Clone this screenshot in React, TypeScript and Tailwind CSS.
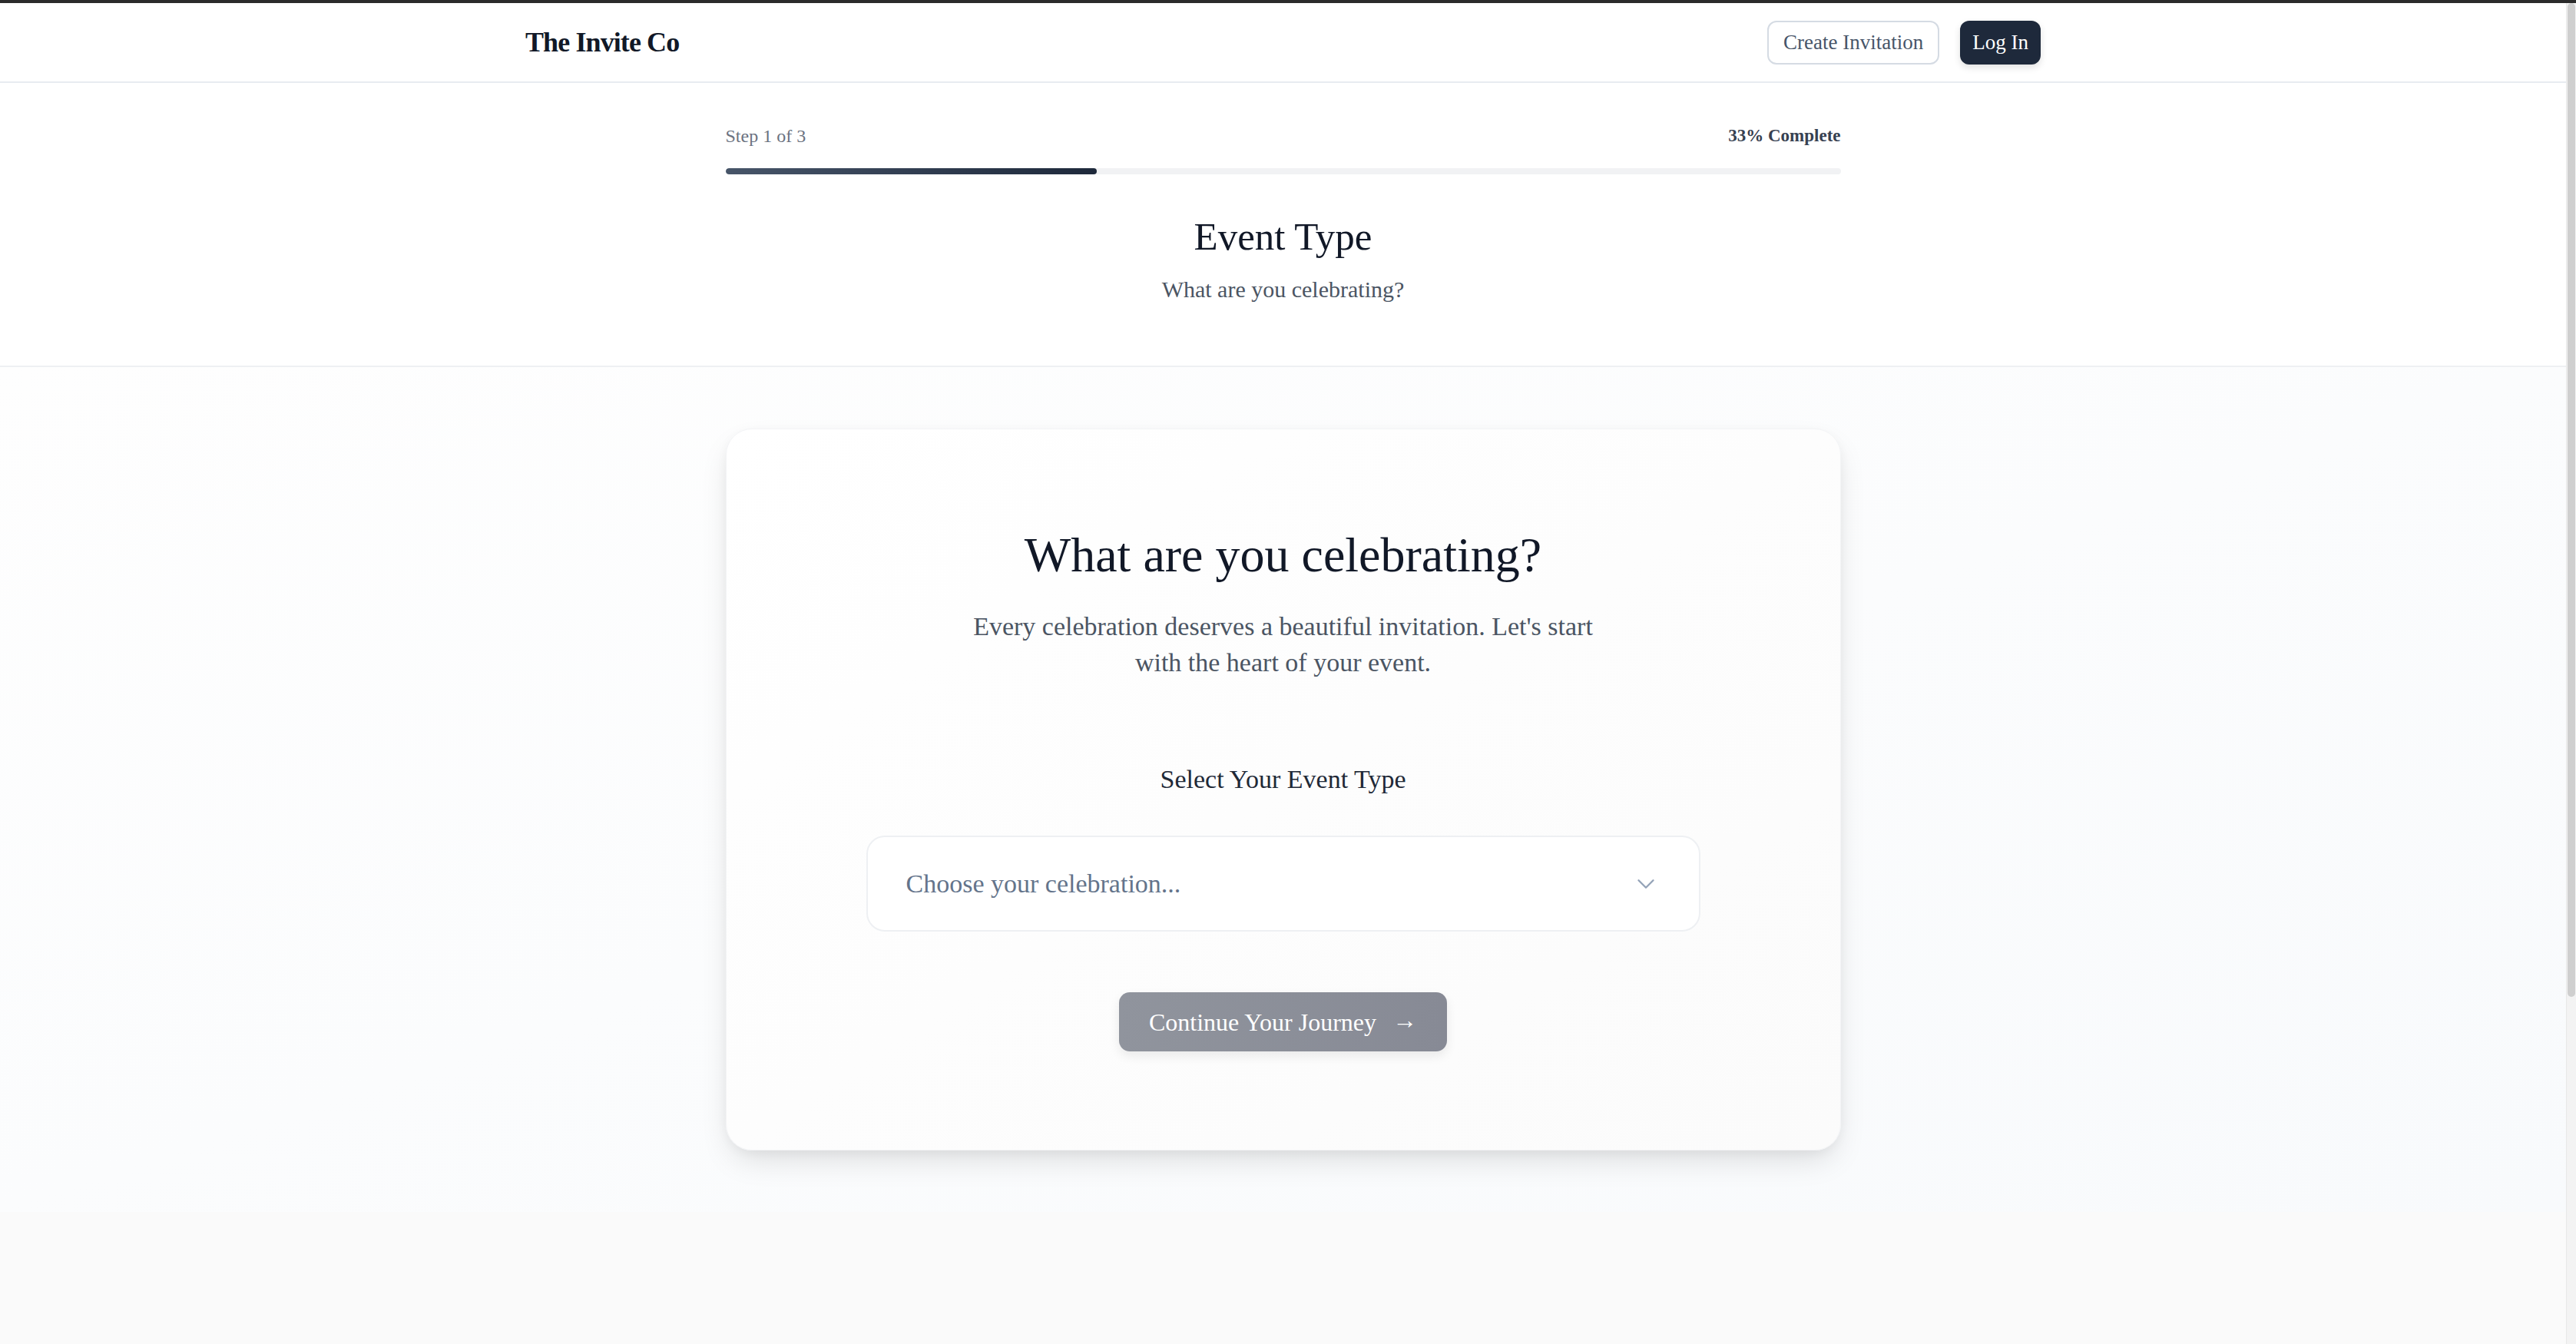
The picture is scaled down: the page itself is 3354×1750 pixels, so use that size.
import React from 'react';
import { ChevronDown } from 'lucide-react';

const serif = { fontFamily: '"Liberation Serif", "DejaVu Serif", serif' };

const Header: React.FC = () => {
  return (
    <header className="bg-white border-b-2 border-[#e8ecf1] h-[104px]">
      <div className="w-[1973px] mx-auto h-full flex items-center justify-between">
        <span className="text-[36px] font-bold text-[#111827] tracking-tight">The Invite Co</span>
        <div className="flex items-center gap-[27px]">
          <button className="h-[57px] px-[19px] rounded-[12px] border-2 border-[#d5dbe3] bg-white text-[27px] text-[#475569]">
            Create Invitation
          </button>
          <button className="h-[57px] px-[16px] rounded-[12px] bg-[#1e293b] text-[27px] text-white shadow-[0_4px_10px_rgba(0,0,0,0.12)]">
            Log In
          </button>
        </div>
      </div>
    </header>
  );
};

const Progress: React.FC = () => {
  const percent = 33.33;
  return (
    <section className="bg-white border-b-2 border-[#eef0f3] pt-[53px] pb-[79px]">
      <div className="w-[1452px] mx-auto">
        <div className="flex items-center justify-between h-[32px]">
          <span className="text-[24px] text-[#6b7280]">Step 1 of 3</span>
          <span className="text-[23px] font-semibold text-[#374151]">33% Complete</span>
        </div>
        <div className="mt-[26px] h-[8px] rounded-full bg-[#f1f2f4] overflow-hidden">
          <div
            className="h-full rounded-full bg-gradient-to-r from-[#475569] to-[#1e293b]"
            style={{ width: `${percent}%` }}
          />
        </div>
        <h1 className="mt-[51px] text-center text-[51px] leading-[60px] text-[#111827]">Event Type</h1>
        <p className="mt-[19px] text-center text-[30px] leading-[40px] text-[#4b5563]">What are you celebrating?</p>
      </div>
    </section>
  );
};

const EventCard: React.FC = () => {
  return (
    <div className="w-[1452px] mx-auto h-[940px] rounded-[34px] bg-gradient-to-br from-white to-[#fbfbfb] border border-[#f3f4f6] shadow-[0_18px_40px_-8px_rgba(0,0,0,0.13),0_4px_14px_rgba(0,0,0,0.04)] pt-[126px] px-[182px]">
      <h2 className="text-center text-[64px] leading-[76px] text-[#111827]">What are you celebrating?</h2>
      <p className="mt-[31px] mx-auto max-w-[830px] text-center text-[34px] leading-[47px] text-[#4b5563]">
        Every celebration deserves a beautiful invitation. Let's start with the heart of your event.
      </p>
      <h3 className="mt-[107px] text-center text-[34px] leading-[44px] text-[#1f2937]">Select Your Event Type</h3>
      <div className="mt-[51px] h-[125px] rounded-[24px] border-2 border-[#eef0f3] bg-white flex items-center justify-between pl-[50px] pr-[50px]">
        <span className="text-[34px] text-[#64748b]">Choose your celebration...</span>
        <ChevronDown className="w-[38px] h-[38px] text-[#94a3b8]" strokeWidth={1.5} />
      </div>
      <div className="mt-[79px] flex justify-center">
        <button className="h-[77px] px-[39px] rounded-[14px] bg-gradient-to-r from-[#90949d] to-[#878a95] text-white text-[32px] flex items-center gap-[21px] shadow-[0_6px_14px_rgba(0,0,0,0.08)]">
          <span>Continue Your Journey</span>
          <span className="text-[32px] leading-none -translate-y-[3px]">→</span>
        </button>
      </div>
    </div>
  );
};

export default function App() {
  return (
    <div className="bg-[#fafafa]" style={serif}>
      <div className="h-[4px] bg-[#2b2b2b]" />
      <div className="flex">
        <div className="flex-1 min-w-0">
          <Header />
          <Progress />
          <main className="bg-gradient-to-br from-[#fefefe] via-[#fbfcfd] to-[#f8fafc] py-[80px]">
            <EventCard />
          </main>
          <div className="h-[790px] bg-[#fafafa]" />
        </div>
        {/* page scrollbar */}
        <div className="w-[13px] bg-[#f3f3f3] border-l border-[#e8e8e8]">
          <div className="h-[1294px] mx-[1px] rounded-full bg-[#cfcfcf]" />
        </div>
      </div>
    </div>
  );
}
